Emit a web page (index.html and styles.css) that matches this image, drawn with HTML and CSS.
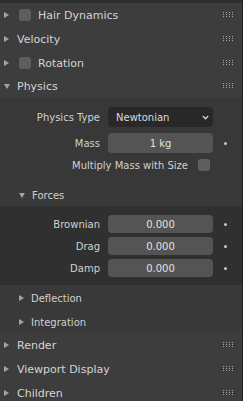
FILE: index.html
```html
<!DOCTYPE html>
<html lang="en">
<head>
    <meta charset="UTF-8">
    <meta name="viewport" content="width=device-width, initial-scale=1.0">
    <title>Particle Properties</title>
    <link rel="stylesheet" href="styles.css">
</head>
<body>

    <div class="editor">
        <div class="strip"></div>

        <div class="panel">
            <div class="head">
                <span class="arrow right"></span>
                <span class="check head-check"></span>
                <span class="title">Hair Dynamics</span>
                <svg class="grip" width="10" height="6" viewBox="0 0 10 6"><path d="M0 0h1v1H0zM3 0h1v1H3zM6 0h1v1H6zM9 0h1v1H9zM0 2h1v1H0zM3 2h1v1H3zM6 2h1v1H6zM9 2h1v1H9zM0 4h1v1H0zM3 4h1v1H3zM6 4h1v1H6zM9 4h1v1H9z" fill="#a8a8a8"/></svg>
            </div>
        </div>

        <div class="panel">
            <div class="head">
                <span class="arrow right"></span>
                <span class="title">Velocity</span>
                <svg class="grip" width="10" height="6" viewBox="0 0 10 6"><path d="M0 0h1v1H0zM3 0h1v1H3zM6 0h1v1H6zM9 0h1v1H9zM0 2h1v1H0zM3 2h1v1H3zM6 2h1v1H6zM9 2h1v1H9zM0 4h1v1H0zM3 4h1v1H3zM6 4h1v1H6zM9 4h1v1H9z" fill="#a8a8a8"/></svg>
            </div>
        </div>

        <div class="panel">
            <div class="head">
                <span class="arrow right"></span>
                <span class="check head-check"></span>
                <span class="title">Rotation</span>
                <svg class="grip" width="10" height="6" viewBox="0 0 10 6"><path d="M0 0h1v1H0zM3 0h1v1H3zM6 0h1v1H6zM9 0h1v1H9zM0 2h1v1H0zM3 2h1v1H3zM6 2h1v1H6zM9 2h1v1H9zM0 4h1v1H0zM3 4h1v1H3zM6 4h1v1H6zM9 4h1v1H9z" fill="#a8a8a8"/></svg>
            </div>
        </div>

        <div class="panel">
            <div class="head open">
                <span class="arrow down"></span>
                <span class="title">Physics</span>
                <svg class="grip" width="10" height="6" viewBox="0 0 10 6"><path d="M0 0h1v1H0zM3 0h1v1H3zM6 0h1v1H6zM9 0h1v1H9zM0 2h1v1H0zM3 2h1v1H3zM6 2h1v1H6zM9 2h1v1H9zM0 4h1v1H0zM3 4h1v1H3zM6 4h1v1H6zM9 4h1v1H9z" fill="#a8a8a8"/></svg>
            </div>

            <div class="body">
                <div class="prop">
                    <span class="label">Physics Type</span>
                    <div class="select">
                        <span>Newtonian</span>
                        <svg class="chevron" width="7" height="5" viewBox="0 0 7 5">
                            <path d="M0.8 1 L3.5 3.8 L6.2 1" fill="none" stroke="#cfcfcf" stroke-width="1.3"/>
                        </svg>
                    </div>
                </div>

                <div class="prop">
                    <span class="label">Mass</span>
                    <div class="num">1 kg</div>
                    <span class="dot"></span>
                </div>

                <div class="check-row">
                    <span class="label">Multiply Mass with Size</span>
                    <span class="check"></span>
                </div>

                <!-- Forces sub-panel is open -->
                <div class="sub">
                    <div class="sub-head forces">
                        <span class="arrow down small"></span>
                        <span class="sub-title">Forces</span>
                    </div>
                    <div class="sub-body">
                        <div class="prop tight">
                            <span class="label">Brownian</span>
                            <div class="num">0.000</div>
                            <span class="dot"></span>
                        </div>
                        <div class="prop tight">
                            <span class="label">Drag</span>
                            <div class="num">0.000</div>
                            <span class="dot"></span>
                        </div>
                        <div class="prop tight">
                            <span class="label">Damp</span>
                            <div class="num">0.000</div>
                            <span class="dot"></span>
                        </div>
                    </div>
                </div>

                <div class="sub">
                    <div class="sub-head">
                        <span class="arrow right small"></span>
                        <span class="sub-title">Deflection</span>
                    </div>
                </div>

                <div class="sub">
                    <div class="sub-head">
                        <span class="arrow right small"></span>
                        <span class="sub-title">Integration</span>
                    </div>
                </div>
            </div>
        </div>

        <div class="panel">
            <div class="head">
                <span class="arrow right"></span>
                <span class="title">Render</span>
                <svg class="grip" width="10" height="6" viewBox="0 0 10 6"><path d="M0 0h1v1H0zM3 0h1v1H3zM6 0h1v1H6zM9 0h1v1H9zM0 2h1v1H0zM3 2h1v1H3zM6 2h1v1H6zM9 2h1v1H9zM0 4h1v1H0zM3 4h1v1H3zM6 4h1v1H6zM9 4h1v1H9z" fill="#a8a8a8"/></svg>
            </div>
        </div>

        <div class="panel">
            <div class="head">
                <span class="arrow right"></span>
                <span class="title">Viewport Display</span>
                <svg class="grip" width="10" height="6" viewBox="0 0 10 6"><path d="M0 0h1v1H0zM3 0h1v1H3zM6 0h1v1H6zM9 0h1v1H9zM0 2h1v1H0zM3 2h1v1H3zM6 2h1v1H6zM9 2h1v1H9zM0 4h1v1H0zM3 4h1v1H3zM6 4h1v1H6zM9 4h1v1H9z" fill="#a8a8a8"/></svg>
            </div>
        </div>

        <div class="panel">
            <div class="head">
                <span class="arrow right"></span>
                <span class="title">Children</span>
                <svg class="grip" width="10" height="6" viewBox="0 0 10 6"><path d="M0 0h1v1H0zM3 0h1v1H3zM6 0h1v1H6zM9 0h1v1H9zM0 2h1v1H0zM3 2h1v1H3zM6 2h1v1H6zM9 2h1v1H9zM0 4h1v1H0zM3 4h1v1H3zM6 4h1v1H6zM9 4h1v1H9z" fill="#a8a8a8"/></svg>
            </div>
        </div>
    </div>

</body>
</html>
```

FILE: styles.css
```css
body {
    margin: 0;
    padding: 0;
    background-color: #2b2b2b;
    font-family: "DejaVu Sans", sans-serif;
    overflow: hidden;
}

.editor {
    width: 242px;
    height: 401px;
    overflow: hidden;
    background-color: #3d3d3d;
    border-right: 1px solid #232323;
}

.strip {
    height: 3px;
    background-color: #2e2e2e;
}

/* panel headers */
.head {
    height: 24px;
    display: flex;
    align-items: center;
    background-color: #3d3d3d;
    color: #d4d4d4;
    font-size: 11px;
}

.head.open {
    height: 22px;
}

.title {
    margin-left: 5px;
    flex: 1;
}

.arrow {
    width: 0;
    height: 0;
    margin-left: 4px;
    flex: none;
}

.arrow.right {
    border-top: 3px solid transparent;
    border-bottom: 3px solid transparent;
    border-left: 5px solid #a3a3a3;
    margin-right: 3px;
}

.arrow.down {
    border-left: 3px solid transparent;
    border-right: 3px solid transparent;
    border-top: 5px solid #a3a3a3;
    margin-right: 2px;
}

.check {
    width: 12px;
    height: 12px;
    border-radius: 3px;
    background-color: #5e5e5e;
    flex: none;
}

.head-check {
    margin-left: 7px;
    margin-right: 2px;
}

.grip {
    margin-right: 9px;
    flex: none;
}

/* physics content */
.body {
    background-color: #383838;
    padding-top: 10px;
}

.prop {
    display: grid;
    grid-template-columns: 100px 105px 1fr;
    column-gap: 8px;
    align-items: center;
    height: 20px;
    margin-bottom: 6px;
}

.prop.tight {
    height: 18px;
    margin-bottom: 4px;
}

.label {
    text-align: right;
    color: #d0d0d0;
    font-size: 10px;
    white-space: nowrap;
}

.select {
    height: 100%;
    box-sizing: border-box;
    background-color: #282828;
    border-radius: 4px;
    color: #dcdcdc;
    font-size: 10px;
    display: flex;
    align-items: center;
    justify-content: space-between;
    padding: 0 4px 0 8px;
}

.num {
    height: 100%;
    background-color: #545454;
    border-radius: 4px;
    color: #e2e2e2;
    font-size: 10px;
    display: flex;
    align-items: center;
    justify-content: center;
}

.dot {
    width: 3px;
    height: 3px;
    border-radius: 50%;
    background-color: #c8c8c8;
    margin-left: 3px;
}

.check-row {
    display: flex;
    align-items: center;
    justify-content: flex-end;
    gap: 10px;
    width: 210px;
    height: 20px;
    margin-top: -4px;
}

/* sub-panels */
.sub-head {
    height: 24px;
    box-sizing: border-box;
    padding-top: 2px;
    display: flex;
    align-items: center;
    background-color: #393939;
    color: #d0d0d0;
    font-size: 10px;
}

.sub-head.forces {
    margin-top: 10px;
    height: 21px;
    padding-top: 0;
}

.arrow.small {
    margin-left: 19px;
    margin-right: 7px;
}

.sub-body {
    background-color: #303030;
    padding: 9px 0 4px;
}
```
